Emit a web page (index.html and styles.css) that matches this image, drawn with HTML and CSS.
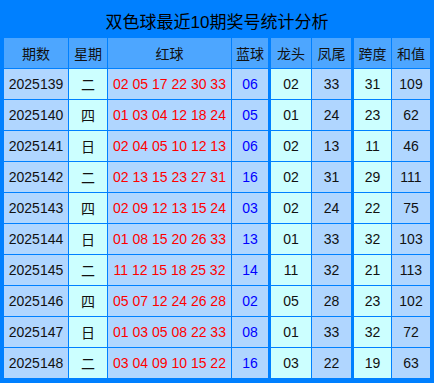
FILE: index.html
```html
<!DOCTYPE html>
<html lang="zh-CN">
<head>
<meta charset="utf-8">
<link rel="stylesheet" href="styles.css">
</head>
<body>
<div class="panel">
  <div class="title">双色球最近10期奖号统计分析</div>
  <div class="grid">
    <div class="hd">期数</div><div class="hd">星期</div><div class="hd">红球</div><div class="hd">蓝球</div><div class="hd g">龙头</div><div class="hd">凤尾</div><div class="hd g">跨度</div><div class="hd">和值</div>

    <div class="c lb">2025139</div><div class="c cy">二</div><div class="c lb red">02 05 17 22 30 33</div><div class="c lb blue">06</div><div class="c cy g">02</div><div class="c lb">33</div><div class="c cy g">31</div><div class="c lb">109</div>
    <div class="c lb">2025140</div><div class="c cy">四</div><div class="c lb red">01 03 04 12 18 24</div><div class="c lb blue">05</div><div class="c cy g">01</div><div class="c lb">24</div><div class="c cy g">23</div><div class="c lb">62</div>
    <div class="c lb">2025141</div><div class="c cy">日</div><div class="c lb red">02 04 05 10 12 13</div><div class="c lb blue">06</div><div class="c cy g">02</div><div class="c lb">13</div><div class="c cy g">11</div><div class="c lb">46</div>
    <div class="c lb">2025142</div><div class="c cy">二</div><div class="c lb red">02 13 15 23 27 31</div><div class="c lb blue">16</div><div class="c cy g">02</div><div class="c lb">31</div><div class="c cy g">29</div><div class="c lb">111</div>
    <div class="c lb">2025143</div><div class="c cy">四</div><div class="c lb red">02 09 12 13 15 24</div><div class="c lb blue">03</div><div class="c cy g">02</div><div class="c lb">24</div><div class="c cy g">22</div><div class="c lb">75</div>
    <div class="c lb">2025144</div><div class="c cy">日</div><div class="c lb red">01 08 15 20 26 33</div><div class="c lb blue">13</div><div class="c cy g">01</div><div class="c lb">33</div><div class="c cy g">32</div><div class="c lb">103</div>
    <div class="c lb">2025145</div><div class="c cy">二</div><div class="c lb red">11 12 15 18 25 32</div><div class="c lb blue">14</div><div class="c cy g">11</div><div class="c lb">32</div><div class="c cy g">21</div><div class="c lb">113</div>
    <div class="c lb">2025146</div><div class="c cy">四</div><div class="c lb red">05 07 12 24 26 28</div><div class="c lb blue">02</div><div class="c cy g">05</div><div class="c lb">28</div><div class="c cy g">23</div><div class="c lb">102</div>
    <div class="c lb">2025147</div><div class="c cy">日</div><div class="c lb red">01 03 05 08 22 33</div><div class="c lb blue">08</div><div class="c cy g">01</div><div class="c lb">33</div><div class="c cy g">32</div><div class="c lb">72</div>
    <div class="c lb">2025148</div><div class="c cy">二</div><div class="c lb red">03 04 09 10 15 22</div><div class="c lb blue">16</div><div class="c cy g">03</div><div class="c lb">22</div><div class="c cy g">19</div><div class="c lb">63</div>
  </div>
</div>
</body>
</html>
```

FILE: styles.css
```css
html, body {
  margin: 0;
  padding: 0;
  background: #ffffff;
}
.panel {
  width: 434px;
  height: 383px;
  box-sizing: border-box;
  background: #0080ff;
  padding: 0 4px 4px 4px;
  font-family: "Liberation Sans", "Noto Sans CJK SC", sans-serif;
}
.title {
  height: 38px;
  display: flex;
  align-items: center;
  justify-content: center;
  font-size: 17px;
  color: #000;
  padding-top: 2px;
  box-sizing: border-box;
}
.grid {
  display: grid;
  grid-template-columns: 64px 38px 123px 36px 42px 39px 39px 38px;
  grid-auto-rows: 30px;
  column-gap: 1px;
  row-gap: 1px;
}
.hd, .c {
  display: flex;
  align-items: center;
  justify-content: center;
  font-size: 14px;
  color: #111;
}
.hd {
  background: #4da6ff;
  font-size: 14px;
}
.g {
  margin-left: 2px;
}
.lb { background: #b0d6ff; }
.cy { background: #ccffff; }
.red { color: #ff0000; }
.blue { color: #0000ff; }
```
